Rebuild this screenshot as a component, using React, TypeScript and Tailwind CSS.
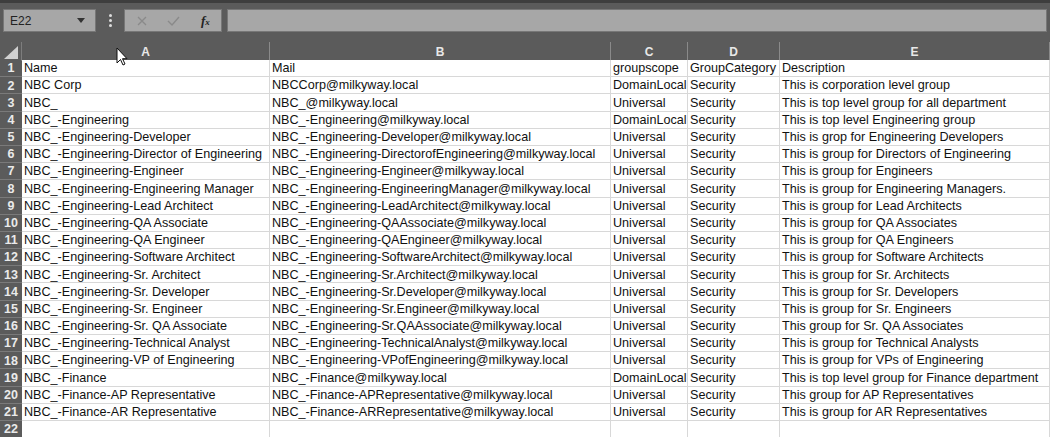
import React from "react";

const rows: string[][] = [
  ["Name", "Mail", "groupscope", "GroupCategory", "Description"],
  ["NBC Corp", "NBCCorp@milkyway.local", "DomainLocal", "Security", "This is corporation level group"],
  ["NBC_", "NBC_@milkyway.local", "Universal", "Security", "This is top level group for all department"],
  ["NBC_-Engineering", "NBC_-Engineering@milkyway.local", "DomainLocal", "Security", "This is top level Engineering group"],
  ["NBC_-Engineering-Developer", "NBC_-Engineering-Developer@milkyway.local", "Universal", "Security", "This is grop for Engineering Developers"],
  ["NBC_-Engineering-Director of Engineering", "NBC_-Engineering-DirectorofEngineering@milkyway.local", "Universal", "Security", "This is group for Directors of Engineering"],
  ["NBC_-Engineering-Engineer", "NBC_-Engineering-Engineer@milkyway.local", "Universal", "Security", "This is group for Engineers"],
  ["NBC_-Engineering-Engineering Manager", "NBC_-Engineering-EngineeringManager@milkyway.local", "Universal", "Security", "This is group for Engineering Managers."],
  ["NBC_-Engineering-Lead Architect", "NBC_-Engineering-LeadArchitect@milkyway.local", "Universal", "Security", "This is group for Lead Architects"],
  ["NBC_-Engineering-QA Associate", "NBC_-Engineering-QAAssociate@milkyway.local", "Universal", "Security", "This is group for QA Associates"],
  ["NBC_-Engineering-QA Engineer", "NBC_-Engineering-QAEngineer@milkyway.local", "Universal", "Security", "This is group for QA Engineers"],
  ["NBC_-Engineering-Software Architect", "NBC_-Engineering-SoftwareArchitect@milkyway.local", "Universal", "Security", "This is group for Software Architects"],
  ["NBC_-Engineering-Sr. Architect", "NBC_-Engineering-Sr.Architect@milkyway.local", "Universal", "Security", "This is group for Sr. Architects"],
  ["NBC_-Engineering-Sr. Developer", "NBC_-Engineering-Sr.Developer@milkyway.local", "Universal", "Security", "This is group for Sr. Developers"],
  ["NBC_-Engineering-Sr. Engineer", "NBC_-Engineering-Sr.Engineer@milkyway.local", "Universal", "Security", "This is group for Sr. Engineers"],
  ["NBC_-Engineering-Sr. QA Associate", "NBC_-Engineering-Sr.QAAssociate@milkyway.local", "Universal", "Security", "This group for Sr. QA Associates"],
  ["NBC_-Engineering-Technical Analyst", "NBC_-Engineering-TechnicalAnalyst@milkyway.local", "Universal", "Security", "This is group for Technical Analysts"],
  ["NBC_-Engineering-VP of Engineering", "NBC_-Engineering-VPofEngineering@milkyway.local", "Universal", "Security", "This is group for VPs of Engineering"],
  ["NBC_-Finance", "NBC_-Finance@milkyway.local", "DomainLocal", "Security", "This is top level group for Finance department"],
  ["NBC_-Finance-AP Representative", "NBC_-Finance-APRepresentative@milkyway.local", "Universal", "Security", "This group for AP Representatives"],
  ["NBC_-Finance-AR Representative", "NBC_-Finance-ARRepresentative@milkyway.local", "Universal", "Security", "This is group for AR Representatives"],
  ["", "", "", "", ""],
];

const cols = ["A", "B", "C", "D", "E"];
const grid = "grid grid-cols-[22px_248px_341px_77px_92px_1fr]";

export default function App() {
  return (
    <div className="relative h-[437px] w-[1050px] overflow-hidden bg-[#5b5b5b] font-['Liberation_Sans',sans-serif]">
      {/* formula bar */}
      <div className="border-t-[3px] border-[#3e3e3e] px-[3px] pt-[6px]">
        <div className="flex h-[23px] items-center">
          <div className="flex h-full w-[93px] items-center justify-between border border-[#777] bg-[#a7a7a7] pl-[6px] pr-[10px] text-[12px] text-[#222]">
            <span>E22</span>
            <svg width="8" height="5" viewBox="0 0 8 5">
              <path d="M0 0h8L4 5z" fill="#333" />
            </svg>
          </div>
          <div className="flex w-[28px] justify-center">
            <div className="flex flex-col gap-[2px]">
              <span className="h-[3px] w-[3px] rounded-full bg-[#ddd]" />
              <span className="h-[3px] w-[3px] rounded-full bg-[#ddd]" />
              <span className="h-[3px] w-[3px] rounded-full bg-[#ddd]" />
            </div>
          </div>
          <div className="flex h-full w-[98px] items-center border border-[#777] bg-[#a7a7a7]">
            <svg className="ml-[12px]" width="10" height="10" viewBox="0 0 10 10">
              <path d="M1 1l8 8M9 1l-8 8" stroke="#8a8a8a" strokeWidth="1.3" />
            </svg>
            <svg className="ml-[20px]" width="13" height="10" viewBox="0 0 13 10">
              <path d="M1 5l4 4 7-8" stroke="#8a8a8a" strokeWidth="1.4" fill="none" />
            </svg>
            <span className="ml-[21px] font-['Liberation_Serif',serif] text-[13px] font-bold italic text-[#222]">
              f<span className="text-[9px]">x</span>
            </span>
          </div>
          <div className="ml-[5px] h-full flex-1 border border-[#777] bg-[#a7a7a7]" />
        </div>
      </div>

      {/* sheet */}
      <div className="mt-[10px]">
        <div className={`${grid} h-[18px] text-[12px] font-bold text-[#e8e8e8]`}>
          <div className="relative border-r border-[#7d7d7d]">
            <svg className="absolute bottom-[2px] right-[3px]" width="14" height="13" viewBox="0 0 14 13">
              <path d="M14 0V13H0z" fill="#d0d0d0" />
            </svg>
          </div>
          {cols.map((c) => (
            <div key={c} className="flex items-center justify-center border-r border-[#8a8a8a] pt-[1px]">
              {c}
            </div>
          ))}
        </div>
        <div className="bg-white">
          {rows.map((r, i) => (
            <div key={i} className={`${grid} h-[17.2px] text-[12.6px] leading-none text-[#111]`}>
              <div className="flex items-center justify-center border-b border-[#7a7a7a] bg-[#5b5b5b] pt-[1px] text-[12.5px] font-bold text-[#eaeaea]">
                {i + 1}
              </div>
              {r.map((cell, j) => (
                <div
                  key={j}
                  className="flex items-center overflow-hidden whitespace-nowrap border-b border-r border-[#d8d8d8] pl-[2px] pt-[1px]"
                >
                  {cell}
                </div>
              ))}
            </div>
          ))}
        </div>
      </div>

      {/* mouse pointer */}
      <svg className="absolute left-[116px] top-[47px]" width="12" height="19" viewBox="0 0 12 19">
        <path d="M1 1v15l3.5-3.5 2.5 5.5 2-1-2.5-5.3H11z" fill="#fff" stroke="#111" strokeWidth="1" />
      </svg>
    </div>
  );
}
